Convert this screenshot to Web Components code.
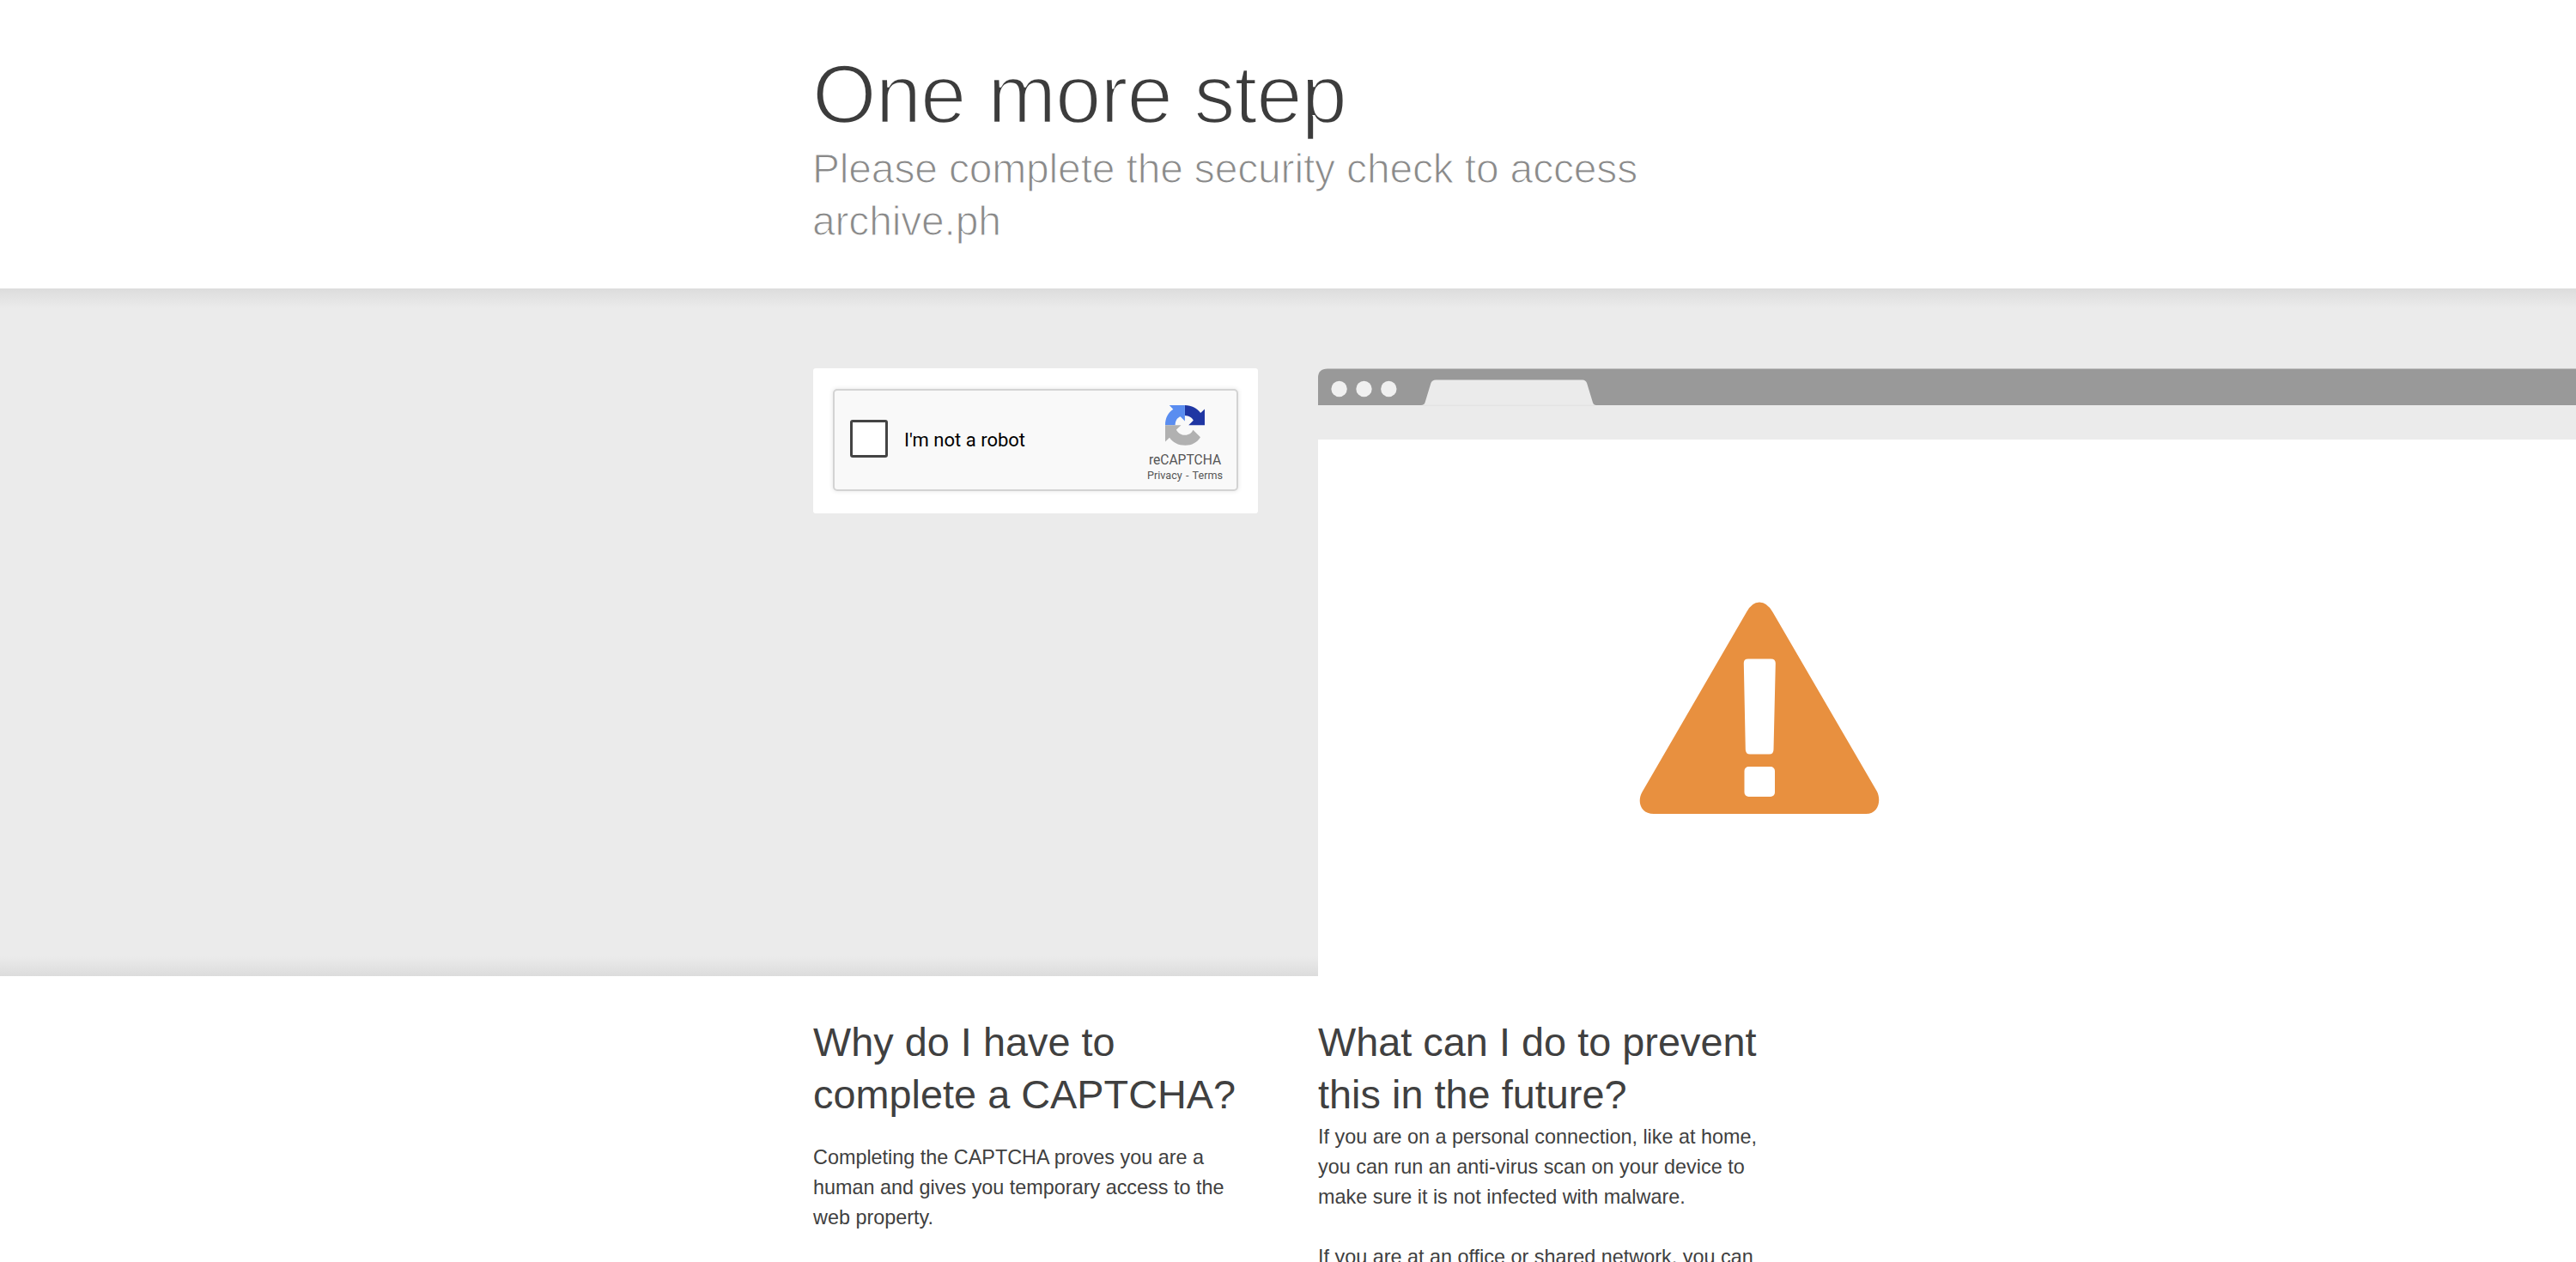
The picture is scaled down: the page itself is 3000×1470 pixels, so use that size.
<!DOCTYPE html>
<html lang="en">
<head>
<meta charset="utf-8">
<title>One more step</title>
<style>
html, body { margin: 0; height: 100%; overflow: hidden; background: #fff; }
body { font: 23.4px/35.1px "Liberation Sans", Arial, sans-serif; color: #404040; }
</style>
</head>
<body>
<challenge-page></challenge-page>
<script>
const define = (name, html) => customElements.define(name, class extends HTMLElement {
  constructor() {
    super();
    const t = document.createElement('template');
    t.innerHTML = html;
    this.attachShadow({ mode: 'open' }).append(t.content.cloneNode(true));
  }
});

define('page-header', `
<style>
:host { display: block; box-sizing: border-box; height: 336px; padding: 63px 1053px 0 946px; }
h1, h2 { margin: 0; font-weight: 400; -webkit-text-stroke-color: #fff; }
h1 { font-size: 96px; line-height: 94px; letter-spacing: -1px; -webkit-text-stroke-width: 2.4px; color: #3c3c3c; }
h2 { font-size: 48px; line-height: 61px; letter-spacing: -.17px; margin-top: 9px; -webkit-text-stroke-width: 1.1px; color: #8a8a8a; }
</style>
<h1><slot name="title"></slot></h1>
<h2><slot name="subtitle"></slot></h2>`);

define('recaptcha-logo', `
<style>:host { display: block; width: 46px; height: 47px; } svg { display: block; }</style>
<svg width="46" height="47" viewBox="0 0 46 47">
  <path fill="#1f36a3" d="M22.900 0C31 0 37 3.500 41.200 9L46 4.600V23.300H27.200L32.800 17.800C31.500 14.200 27.500 12 22.900 11.900z"/>
  <path fill="#5a8df0" d="M22.900 0V18.600L17.700 13.200C14 14.500 11.700 18 11.600 23.300H0C0 14.500 3.500 8.800 9.300 4.800L4.800 0z"/>
  <path fill="#b1b1b1" d="M0 23.300H18.500L12.900 28.400C15 32.400 18.500 34.700 23 34.700C27.500 34.700 31 32.500 32.400 28.700L41 37.200C37 43.500 31 46.700 23.500 46.700C15 46.700 8.800 43.300 5 37.700L0 42.500z"/>
</svg>`);

define('recaptcha-widget', `
<style>
:host { display: flex; box-sizing: border-box; width: 472px; height: 119px; padding: 0 15px 0 18px; align-items: center; background: #f9f9f9; border: 2px solid #d3d3d3; border-radius: 5px; box-shadow: 0 0 5px 1px rgba(0,0,0,.08); font-family: Roboto, sans-serif; }
.box { box-sizing: border-box; width: 44px; height: 44px; border: 3px solid #444; border-radius: 3px; background: #fff; margin-top: -3px; }
.label { margin-left: 19px; font-size: 22px; line-height: 28px; color: #000; flex: 1; }
.brand { width: 90px; display: flex; flex-direction: column; align-items: center; color: #555; white-space: nowrap; padding-top: 9px; }
.name { font-size: 15.6px; line-height: 18px; margin-top: 8px; }
.links { font-size: 12.6px; line-height: 16px; margin-top: 1px; word-spacing: 1.2px; }
</style>
<span class="box"></span><span class="label">I'm not a robot</span>
<div class="brand"><recaptcha-logo></recaptcha-logo><span class="name">reCAPTCHA</span><span class="links">Privacy - Terms</span></div>`);

define('captcha-card', `
<style>:host { display: flex; box-sizing: border-box; width: 518px; height: 169px; padding: 24px 0 0 23px; background: #fff; border-radius: 3px; }</style>
<slot></slot>`);

define('browser-art', `
<style>:host { display: block; background: #fff; height: 708px; overflow: hidden; } svg { display: block; }</style>
<svg width="1465" height="708" viewBox="1535 429 1465 708">
  <path fill="#ebebeb" d="M1535 429H3000V512H1535z"/>
  <path fill="#999" d="M1535 472V440Q1535 429.500 1546 429.500H3000V472H1859Q1856 472 1855 469L1848 446Q1846.500 442.500 1843 442.500H1672Q1668 442.500 1666.500 446L1659.500 469Q1658.500 472 1655 472z"/>
  <path stroke="#e0e0e0" d="M1657 472.200H1857"/>
  <g fill="#f0f0f0"><circle cx="1559.600" cy="453" r="9.200"/><circle cx="1588.500" cy="453" r="9.200"/><circle cx="1617.300" cy="453" r="9.200"/></g>
  <path fill="#e8903f" d="M2034 713Q2040 701.500 2049 701.500T2064.500 713L2186 922C2191 932 2188 948 2173 948H1926C1911 948 1906 934 1912.500 922.500z"/>
  <path fill="#fff" d="M2036 767.500H2062.500Q2068 767.500 2067.800 773L2065.500 873Q2065.500 878.500 2060.500 878.500H2038Q2033 878.500 2032.800 873L2030.800 773Q2030.500 767.500 2036 767.500z"/>
  <rect fill="#fff" x="2031.500" y="893" width="35.500" height="35" rx="5"/>
</svg>`);

define('challenge-band', `
<style>
:host { display: flex; box-sizing: border-box; height: 801px; padding: 93px 0 0 947px; background: linear-gradient(#dcdcdc, #ebebeb 23px, #ebebeb 778px, #dcdcdc); }
.left { flex: none; width: 588px; } .right { flex: 1; }
</style>
<div class="left"><slot name="card"></slot></div><div class="right"><slot name="art"></slot></div>`);

define('info-column', `
<style>
:host { display: block; width: 520px; flex: none; white-space: nowrap; }
h2 { margin: 0; font-size: 46.8px; line-height: 61px; font-weight: 400; letter-spacing: .03px; }
</style>
<h2><slot name="heading"></slot></h2><slot></slot>`);

define('info-text', `
<style>:host { display: block; line-height: 35.1px; margin-top: var(--gap, 0); }</style><slot></slot>`);

define('challenge-page', `
<style>
:host { display: block; height: 1470px; overflow: hidden; }
.info { display: flex; gap: 68px; padding: 47px 0 0 947px; }
.first { --gap: 25px; } .only { --gap: 1px; } .next { --gap: 35px; }
</style>
<page-header><span slot="title">One more step</span><span slot="subtitle">Please complete the security check to access<br>archive.ph</span></page-header>
<challenge-band>
  <captcha-card slot="card"><recaptcha-widget></recaptcha-widget></captcha-card>
  <browser-art slot="art"></browser-art>
</challenge-band>
<div class="info">
  <info-column><span slot="heading">Why do I have to<br>complete a CAPTCHA?</span>
    <info-text class="first">Completing the CAPTCHA proves you are a<br>human and gives you temporary access to the<br>web property.</info-text></info-column>
  <info-column><span slot="heading">What can I do to prevent<br>this in the future?</span>
    <info-text class="only">If you are on a personal connection, like at home,<br>you can run an anti-virus scan on your device to<br>make sure it is not infected with malware.</info-text>
    <info-text class="next">If you are at an office or shared network, you can</info-text></info-column>
</div>`);
</script>
</body>
</html>
